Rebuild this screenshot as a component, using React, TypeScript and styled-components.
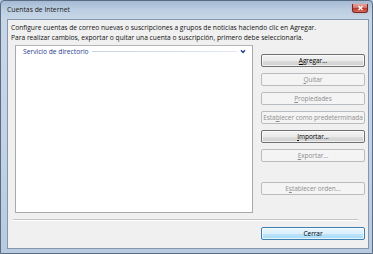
import React from 'react';
import styled, { createGlobalStyle } from 'styled-components';

const Global = createGlobalStyle`
  html, body { margin: 0; padding: 0; width: 373px; height: 254px; overflow: hidden; background: #bccde0; }
  #root { width: 373px; height: 254px; }
  * { box-sizing: border-box; }
`;

const Window = styled.div`
  width: 373px;
  height: 254px;
  border: 1px solid #5a6c82;
  border-radius: 4px 4px 0 0;
  background: linear-gradient(#a4bbd4 0px, #bccee2 9px, #c8d7e8 18px, #c2d2e4 60%, #b8cadf 100%);
  display: flex;
  flex-direction: column;
  font-family: "Open Sans", "Noto Sans", sans-serif;
  color: #000;
`;

const TitleBar = styled.div`
  height: 18px;
  display: flex;
  align-items: center;
  justify-content: space-between;
  padding: 0 4px 0 6px;
`;

const Title = styled.span`
  font-size: 6.8px;
  line-height: 10px;
  color: #1a1a1a;
`;

const CloseButton = styled.div`
  width: 16px;
  height: 9px;
  margin-top: -4px;
  border: 1px solid #6e2b2b;
  border-top: none;
  border-radius: 0 0 3px 3px;
  background: linear-gradient(#e5a49b 0%, #d4776c 45%, #c0392b 55%, #d76a55 100%);
  display: flex;
  align-items: center;
  justify-content: center;
  box-shadow: 0 0 2px rgba(255, 120, 100, 0.6);
`;

const Client = styled.div`
  flex: 1;
  margin: 0 3px 4px 6px;
  background: #f0f0f0;
  border: 1px solid #8497b0;
  display: flex;
  flex-direction: column;
`;

const Intro = styled.p`
  margin: 3px 0 0 3px;
  font-size: 6.68px;
  line-height: 10px;
  white-space: nowrap;
  color: #111;
`;

const MainRow = styled.div`
  display: flex;
  gap: 8px;
  margin-top: 2px;
  padding: 0 3px 0 7px;
`;

const ListBox = styled.div`
  width: 238px;
  height: 168px;
  background: #fff;
  border: 1px solid #a9a9a9;
  border-top-color: #b5b5b5;
  padding: 1px 6px 0 7px;
`;

const GroupHeader = styled.div`
  display: flex;
  align-items: center;
  gap: 3px;
  height: 9px;
`;

const GroupTitle = styled.span`
  font-size: 6.68px;
  line-height: 9px;
  color: #1e3b8c;
  white-space: nowrap;
`;

const GroupLine = styled.div`
  flex: 1;
  height: 1px;
  background: linear-gradient(90deg, #c9d3e3, #e2e8f0);
`;

const ButtonColumn = styled.div`
  width: 104px;
  display: flex;
  flex-direction: column;
  gap: 6px;
  padding-top: 9px;
`;

const Button = styled.div<{ $disabled?: boolean; $default?: boolean; $gapBefore?: number }>`
  height: 13px;
  margin-top: ${p => p.$gapBefore ?? 0}px;
  border: 1px solid ${p => (p.$default ? '#3c7fb1' : p.$disabled ? '#b9bcbf' : '#707070')};
  border-radius: 2px;
  background: ${p =>
    p.$default
      ? 'linear-gradient(#eaf6fd 0%, #d9f0fc 50%, #bee6fd 51%, #a7d9f5 100%)'
      : p.$disabled
      ? '#f4f4f4'
      : 'linear-gradient(#f2f2f2 0%, #ebebeb 50%, #dddddd 51%, #cfcfcf 100%)'};
  box-shadow: inset 0 0 0 1px ${p => (p.$disabled ? 'transparent' : 'rgba(255,255,255,0.7)')};
  display: flex;
  align-items: center;
  justify-content: center;
  font-size: 6.5px;
  line-height: 10px;
  letter-spacing: -0.05px;
  white-space: nowrap;
  overflow: hidden;
  color: ${p => (p.$disabled ? '#8f8f8f' : '#000')};
`;

const Separator = styled.div`
  height: 2px;
  margin: 6px 10px 0 5px;
  border-top: 1px solid #c5c5c5;
  border-bottom: 1px solid #ffffff;
`;

const Footer = styled.div`
  display: flex;
  justify-content: flex-end;
  padding: 6px 3px 0 0;
`;

const FooterButton = styled(Button)`
  width: 104px;
`;

const Chevron = () => (
  <svg width="6" height="5" viewBox="0 0 6 5">
    <path d="M1 1.2 L3 3.4 L5 1.2" fill="none" stroke="#1e3b8c" strokeWidth="1.4" />
  </svg>
);

const CloseX = () => (
  <svg width="7" height="6" viewBox="0 0 7 6">
    <path d="M1.5 1 L5.5 5 M5.5 1 L1.5 5" stroke="#fff" strokeWidth="1.3" />
  </svg>
);

export default function App() {
  return (
    <>
      <Global />
      <Window>
        <TitleBar>
          <Title>Cuentas de Internet</Title>
          <CloseButton>
            <CloseX />
          </CloseButton>
        </TitleBar>
        <Client>
          <Intro>
            Configure cuentas de correo nuevas o suscripciones a grupos de noticias haciendo clic en Agregar.
            <br />
            Para realizar cambios, exportar o quitar una cuenta o suscripción, primero debe seleccionarla.
          </Intro>
          <MainRow>
            <ListBox>
              <GroupHeader>
                <GroupTitle>Servicio de directorio</GroupTitle>
                <GroupLine />
                <Chevron />
              </GroupHeader>
            </ListBox>
            <ButtonColumn>
              <Button><u>A</u>gregar...</Button>
              <Button $disabled><u>Q</u>uitar</Button>
              <Button $disabled><u>P</u>ropiedades</Button>
              <Button $disabled>Esta<u>b</u>lecer como predeterminada</Button>
              <Button><u>I</u>mportar...</Button>
              <Button $disabled><u>E</u>xportar...</Button>
              <Button $disabled $gapBefore={14}>E<u>s</u>tablecer orden...</Button>
            </ButtonColumn>
          </MainRow>
          <Separator />
          <Footer>
            <FooterButton $default>Cerrar</FooterButton>
          </Footer>
        </Client>
      </Window>
    </>
  );
}
